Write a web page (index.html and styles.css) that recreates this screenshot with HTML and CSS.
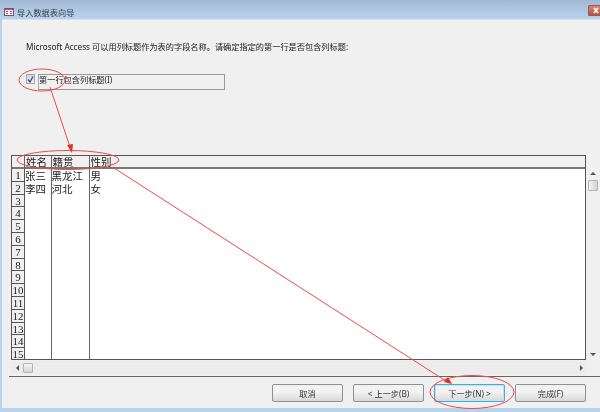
FILE: index.html
```html
<!DOCTYPE html>
<html lang="zh-CN">
<head>
    <meta charset="UTF-8">
    <meta name="viewport" content="width=device-width, initial-scale=1.0">
    <title>导入数据表向导</title>
    <link rel="stylesheet" href="styles.css">
</head>
<body>
    <div class="window">
        <div class="titlebar">
            <svg class="app-icon" width="10" height="8" viewBox="0 0 10 8">
                <rect x="0.5" y="0.5" width="9" height="7" fill="#f6eef2" stroke="#8c4a6c"/>
                <path d="M1 1.5h8" stroke="#a65a80"/>
                <path d="M2 3.5h2M2 5.5h2M6 3.5h2M6 5.5h2" stroke="#6d6d7d" fill="none"/>
            </svg>
            <span class="title-text">导入数据表向导</span>
            <div class="close-btn">
                <svg width="12" height="11" viewBox="0 0 12 11"><path d="M6 3 L10 8 M10 3 L6 8" stroke="#fff" stroke-width="1.6"/></svg>
            </div>
        </div>

        <div class="content">
            <p class="intro">Microsoft Access 可以用列标题作为表的字段名称。请确定指定的第一行是否包含列标题:</p>

            <div class="option-row">
                <span class="checkbox">
                    <svg width="7" height="7" viewBox="0 0 7 7"><path d="M1 3.5 L3 6 L6 0.5" fill="none" stroke="#2c4f9e" stroke-width="1.3"/></svg>
                </span>
                <div class="option-box">第一行包含列标题(I)</div>
            </div>

            <div class="grid-area">
                <div class="sheet">
                    <div class="sheet-head">
                        <span class="gutter-head"></span>
                        <span class="col-name">姓名</span>
                        <span class="col-place">籍贯</span>
                        <span class="col-sex">性别</span>
                    </div>
                    <div class="sheet-body">
                        <span class="num">1</span><span class="cell">张三</span><span class="cell">黑龙江</span><span class="cell">男</span>
                        <span class="num">2</span><span class="cell">李四</span><span class="cell">河北</span><span class="cell">女</span>
                        <span class="num">3</span><span class="cell"></span><span class="cell"></span><span class="cell"></span>
                        <span class="num">4</span><span class="cell"></span><span class="cell"></span><span class="cell"></span>
                        <span class="num">5</span><span class="cell"></span><span class="cell"></span><span class="cell"></span>
                        <span class="num">6</span><span class="cell"></span><span class="cell"></span><span class="cell"></span>
                        <span class="num">7</span><span class="cell"></span><span class="cell"></span><span class="cell"></span>
                        <span class="num">8</span><span class="cell"></span><span class="cell"></span><span class="cell"></span>
                        <span class="num">9</span><span class="cell"></span><span class="cell"></span><span class="cell"></span>
                        <span class="num">10</span><span class="cell"></span><span class="cell"></span><span class="cell"></span>
                        <span class="num">11</span><span class="cell"></span><span class="cell"></span><span class="cell"></span>
                        <span class="num">12</span><span class="cell"></span><span class="cell"></span><span class="cell"></span>
                        <span class="num">13</span><span class="cell"></span><span class="cell"></span><span class="cell"></span>
                        <span class="num">14</span><span class="cell"></span><span class="cell"></span><span class="cell"></span>
                        <span class="num">15</span><span class="cell"></span><span class="cell"></span><span class="cell"></span>
                    </div>
                </div>
                <div class="vscroll">
                    <span class="arrow-up"></span>
                    <span class="thumb"></span>
                    <span class="arrow-down"></span>
                </div>
            </div>

            <div class="hscroll">
                <span class="arrow-left"></span>
                <span class="thumb"></span>
                <span class="arrow-right"></span>
            </div>

            <div class="divider"></div>

            <div class="buttons">
                <button class="btn">取消</button>
                <button class="btn">&lt; 上一步(B)</button>
                <button class="btn btn-default">下一步(N) &gt;</button>
                <button class="btn">完成(F)</button>
            </div>
        </div>
    </div>

    <!-- red annotations drawn on top of the screenshot -->
    <svg class="notes" width="600" height="412" viewBox="0 0 600 412">
        <g fill="none" stroke="#ee4a4a" stroke-width="1">
            <ellipse cx="42" cy="80" rx="23" ry="11"/>
            <ellipse cx="68" cy="160" rx="51" ry="9.5"/>
            <ellipse cx="472" cy="392" rx="42" ry="16.5"/>
            <path d="M50 87 L71 150"/>
            <path d="M114 168 L449 383"/>
        </g>
        <path d="M72 153 L67 145 L73 144 Z" fill="#e62e2e"/>
        <path d="M452 384 L444 382 L448 377 Z" fill="#e62e2e"/>
    </svg>
</body>
</html>
```

FILE: styles.css
```css
* {
    box-sizing: border-box;
}
html, body {
    margin: 0;
    padding: 0;
}
body {
    width: 600px;
    height: 412px;
    overflow: hidden;
    position: relative;
    font-family: "Noto Sans", "Noto Sans CJK SC", sans-serif;
    font-size: 8.2px;
    color: #222;
    background: #b9d3ee;
}
.window {
    height: 408px;
    display: flex;
    flex-direction: column;
    filter: blur(0.35px);
}
.titlebar {
    height: 19px;
    flex: none;
    display: flex;
    align-items: center;
    padding: 5px 0 0 4px;
    background: linear-gradient(#a2b9d4, #b9d3ee);
}
.app-icon {
    flex: none;
}
.title-text {
    margin-left: 3px;
    color: #333d4a;
}
.close-btn {
    margin-left: auto;
    margin-top: -3px;
    width: 12px;
    height: 11px;
    background: linear-gradient(#e08a78, #c4472f);
    border-radius: 2px 0 0 2px;
    box-shadow: inset 1px 1px 0 #8a5f66, inset 0 -1px 0 #8a5f66;
}
.close-btn svg {
    display: block;
}
.content {
    flex: 1;
    margin-left: 2px;
    background: #f0f0f0;
    padding-top: 21px;
    border-top: 1px solid #d8e2ee;
}
.intro {
    margin: 0 0 0 24px;
    line-height: 11px;
}
.option-row {
    display: flex;
    margin: 22px 0 0 24px;
}
.checkbox {
    width: 9px;
    height: 10px;
    display: flex;
    align-items: center;
    justify-content: center;
    background: linear-gradient(#d4d4d4, #eef0f4);
    border: 1px solid #aaa;
}
.option-box {
    width: 187px;
    height: 16px;
    margin-left: 3px;
    border: 1px solid #999;
    border-left-color: #aaa;
    line-height: 10px;
}
.grid-area {
    display: flex;
    margin: 65px 0 0 9px;
    height: 205px;
}
.sheet {
    width: 575px;
    height: 205px;
    background: #fff;
    border: 1px solid #555;
    overflow: hidden;
    font-size: 10.5px;
    color: #222;
}
.sheet-head {
    display: grid;
    grid-template-columns: 13px 26.5px 38px 1fr;
    height: 13px;
    line-height: 12px;
    background: #f0f0f0;
    border-bottom: 2px solid #777;
}
.sheet-head span {
    border-right: 1px solid #666;
    padding-left: 1px;
    white-space: nowrap;
}
.sheet-head span:last-child {
    border-right: none;
}
.sheet-body {
    display: grid;
    grid-template-columns: 13px 26.5px 38px 1fr;
    grid-auto-rows: 12.8px;
}
.num {
    background: #f0f0f0;
    border-bottom: 1px solid #555;
    border-right: 1px solid #555;
    text-align: center;
    line-height: 12px;
    font-family: "Liberation Serif", serif;
    font-size: 11px;
}
.cell {
    border-right: 1px solid #666;
    line-height: 14px;
    white-space: nowrap;
}
.cell:nth-child(4n) {
    border-right: none;
    padding-left: 1px;
}
.vscroll {
    width: 14px;
    display: flex;
    flex-direction: column;
    align-items: center;
    padding-top: 17px;
    background: #f0f0f0;
}
.arrow-up {
    width: 0;
    height: 0;
    border-left: 3px solid transparent;
    border-right: 3px solid transparent;
    border-bottom: 3px solid #555;
}
.arrow-down {
    width: 0;
    height: 0;
    margin-top: auto;
    margin-bottom: 4px;
    border-left: 3px solid transparent;
    border-right: 3px solid transparent;
    border-top: 3px solid #555;
}
.thumb {
    background: linear-gradient(90deg, #f4f4f4, #d4d4d4);
    border: 1px solid #b4b4b4;
    border-radius: 1px;
}
.vscroll .thumb {
    width: 10px;
    height: 11px;
    margin-top: 5px;
}
.hscroll {
    display: flex;
    align-items: center;
    height: 13px;
    margin: 1px 14px 0 9px;
    padding: 0 3px 0 5px;
    background: #ececec;
}
.arrow-left {
    width: 0;
    height: 0;
    border-top: 3px solid transparent;
    border-bottom: 3px solid transparent;
    border-right: 3px solid #555;
}
.arrow-right {
    width: 0;
    height: 0;
    margin-left: auto;
    border-top: 3px solid transparent;
    border-bottom: 3px solid transparent;
    border-left: 3px solid #555;
}
.hscroll .thumb {
    width: 10px;
    height: 10px;
    margin-left: 4px;
    background: linear-gradient(#f4f4f4, #d4d4d4);
}
.divider {
    height: 1px;
    margin: 2px 0 0 7px;
    background: #666;
}
.buttons {
    display: flex;
    gap: 10px;
    justify-content: flex-end;
    margin: 7px 14px 0 0;
}
.btn {
    width: 71px;
    height: 18px;
    padding: 0;
    font: inherit;
    color: #333;
    background: linear-gradient(#f2f2f2 45%, #d8d8d8);
    border: 1px solid #8f8f8f;
    border-radius: 2px;
}
.btn-default {
    border-color: #4fa8cf;
    box-shadow: inset 0 0 0 1px #bfe3f2;
}
.notes {
    position: absolute;
    top: 0;
    left: 0;
}
```
